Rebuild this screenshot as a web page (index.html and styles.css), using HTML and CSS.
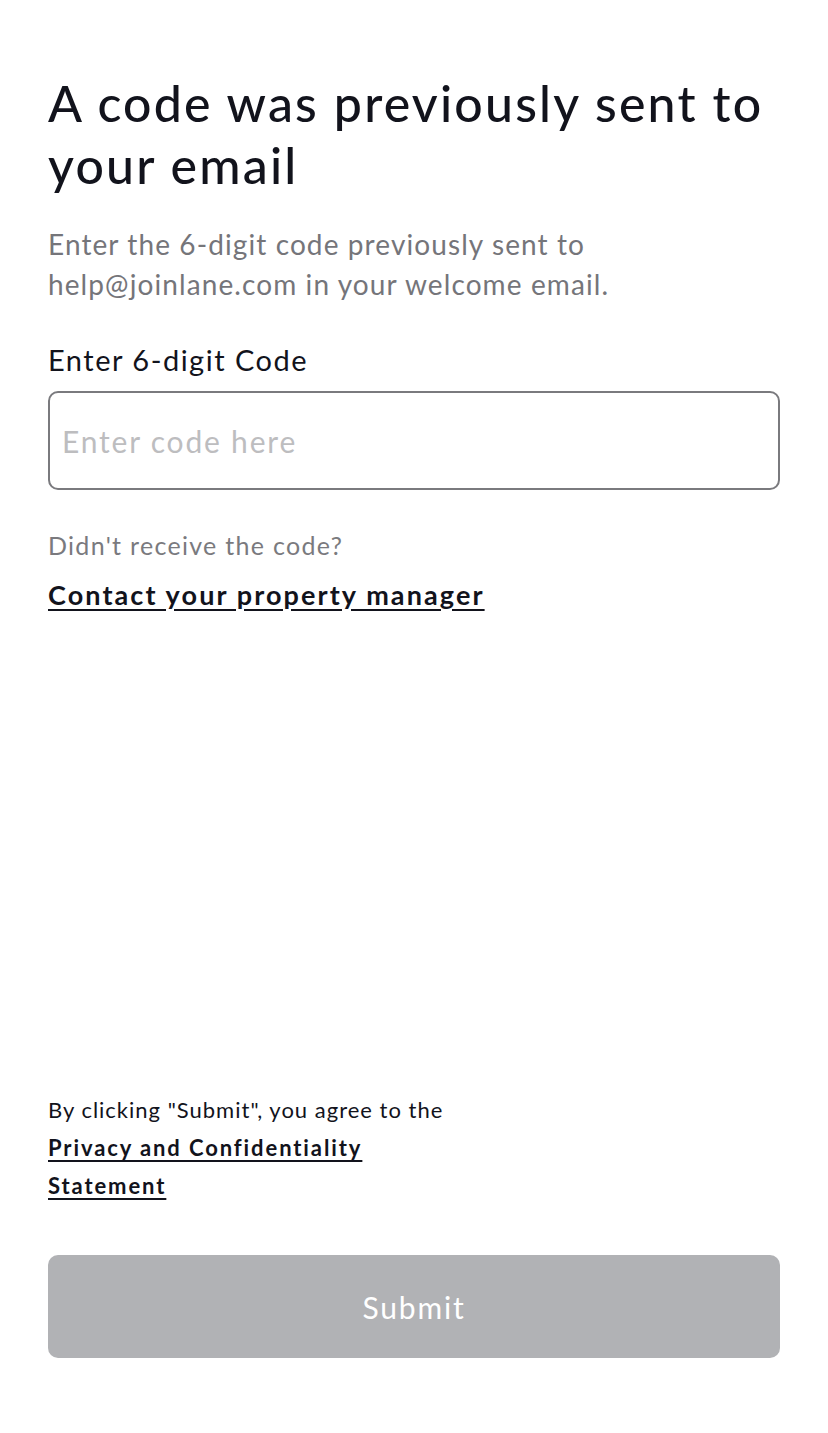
FILE: index.html
```html
<!DOCTYPE html>
<html lang="en">
<head>
    <meta charset="UTF-8">
    <meta name="viewport" content="width=device-width, initial-scale=1.0">
    <title>Verify code</title>
    <link rel="stylesheet" href="styles.css">
</head>
<body>
    <div class="page">
        <!-- top part -->
        <div class="intro">
            <h1>A code was previously sent to your email</h1>
            <p class="subtitle">Enter the 6-digit code previously sent to<br>help@joinlane.com in your welcome email.</p>
        </div>

        <label class="code-label" for="code">Enter 6-digit Code</label>
        <input type="text" id="code" class="code-input" placeholder="Enter code here">

        <p class="hint">Didn't receive the code?</p>
        <a href="#" class="contact-link">Contact your property manager</a>

        <!-- bottom part -->
        <div class="footer">
            <p class="terms">By clicking "Submit", you agree to the<br>
                <a href="#" class="terms-link">Privacy and Confidentiality<br>Statement</a>
            </p>
            <button class="submit-btn" disabled>Submit</button>
        </div>
    </div>
</body>
</html>
```

FILE: styles.css
```css
html, body {
    margin: 0;
    padding: 0;
    background-color: #fff;
}

body {
    font-family: Lato, "Noto Sans", sans-serif;
    color: #12131c;
}

.page {
    min-height: 100vh;
    box-sizing: border-box;
    padding: 72px 48px 75px;
    display: flex;
    flex-direction: column;
}

h1 {
    margin: 0;
    font-size: 50px;
    font-weight: 500;
    line-height: 62px;
    letter-spacing: 2.2px;
}

.subtitle {
    margin: 28px 0 0;
    font-size: 28px;
    line-height: 40px;
    letter-spacing: 1.1px;
    color: #75757a;
}

.code-label {
    margin-top: 36px;
    font-size: 29px;
    line-height: 40px;
    letter-spacing: 1.5px;
}

.code-input {
    margin-top: 11px;
    height: 99px;
    box-sizing: border-box;
    border: 2px solid #7a7a7e;
    border-radius: 10px;
    padding: 0 12px;
    font-family: inherit;
    font-size: 30px;
    letter-spacing: 1.8px;
    color: #12131c;
    outline: none;
}
.code-input::placeholder {
    color: #bdbdbf;
}

.hint {
    margin: 37px 0 0;
    font-size: 25px;
    line-height: 36px;
    letter-spacing: 1.3px;
    color: #7a7a7e;
}

.contact-link {
    margin-top: 14px;
    font-size: 27px;
    line-height: 36px;
    font-weight: 700;
    letter-spacing: 2.1px;
    color: #12131c;
    text-decoration: underline;
    text-underline-offset: 4px;
    align-self: flex-start;
}

.footer {
    margin-top: auto;
}

.terms {
    margin: 0;
    font-size: 22px;
    line-height: 38px;
    letter-spacing: 1px;
}

.terms-link {
    font-weight: 700;
    letter-spacing: 1.9px;
    color: #12131c;
    text-decoration: underline;
    text-underline-offset: 4px;
}

.submit-btn {
    margin-top: 50px;
    width: 100%;
    height: 103px;
    border: none;
    border-radius: 10px;
    background-color: #b1b2b5;
    color: #fff;
    font-family: inherit;
    font-size: 30px;
    letter-spacing: 1.8px;
    display: block;
}
```
